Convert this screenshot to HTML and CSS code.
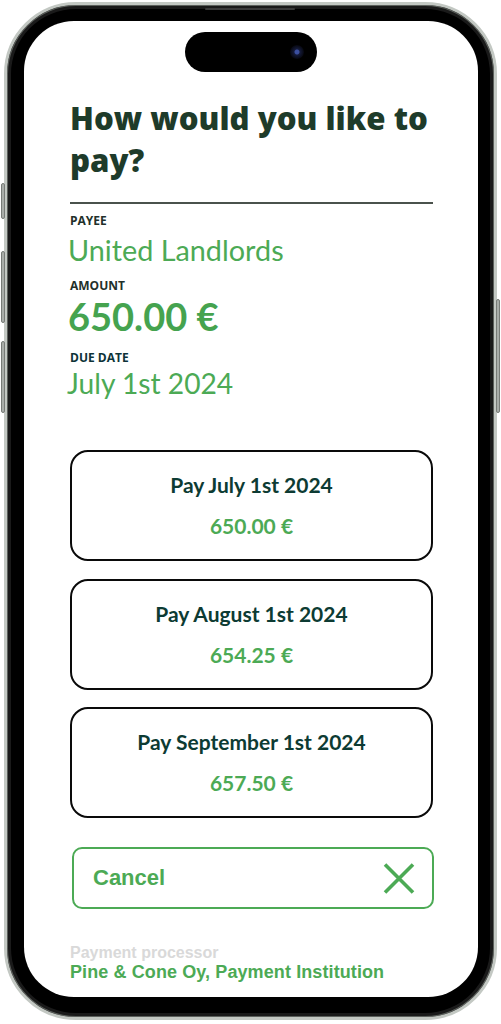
FILE: index.html
```html
<!DOCTYPE html>
<html lang="en">
<head>
<meta charset="utf-8">
<title>How would you like to pay?</title>
<link rel="stylesheet" href="styles.css">
</head>
<body>
<div class="phone">
  <span class="hw hw-silent"></span>
  <span class="hw hw-vol-up"></span>
  <span class="hw hw-vol-down"></span>
  <span class="hw hw-power"></span>
  <span class="speaker"></span>
  <div class="screen">
    <div class="island"><span class="cam"></span></div>
    <h1 class="title">How would you like to<br>pay?</h1>
    <div class="rule"></div>
    <div class="label label-payee">PAYEE</div>
    <div class="value">United Landlords</div>
    <div class="label label-amount">AMOUNT</div>
    <div class="value value-amount">650.00 €</div>
    <div class="label label-due">DUE DATE</div>
    <div class="value value-due">July 1st 2024</div>

    <div class="options">
      <div class="option">
        <div class="option-title">Pay July 1st 2024</div>
        <div class="option-amount">650.00 €</div>
      </div>
      <div class="option">
        <div class="option-title">Pay August 1st 2024</div>
        <div class="option-amount">654.25 €</div>
      </div>
      <div class="option">
        <div class="option-title">Pay September 1st 2024</div>
        <div class="option-amount">657.50 €</div>
      </div>
    </div>

    <div class="cancel">
      <span class="cancel-text">Cancel</span>
      <svg class="cancel-icon" width="32" height="31" viewBox="0 0 32 31" aria-hidden="true">
        <path d="M2 1.5 L30 29.5 M30 1.5 L2 29.5" stroke="#4caa55" stroke-width="3.6" fill="none"/>
      </svg>
    </div>

    <div class="proc-label">Payment processor</div>
    <div class="proc-name">Pine &amp; Cone Oy, Payment Institution</div>
  </div>
</div>
</body>
</html>
```

FILE: styles.css
```css
html, body {
  margin: 0;
  padding: 0;
  background: #ffffff;
}

body {
  width: 501px;
  height: 1024px;
  overflow: hidden;
}

.phone {
  position: relative;
  box-sizing: border-box;
  margin: 2px 0 0 4px;
  width: 493px;
  height: 1018px;
  border: 3px solid #c3c8c3;
  border-radius: 72px;
  background: #000;
  box-shadow: inset 0 0 0 1px #5c605c, inset 0 0 0 4px #1a1a1a;
  padding: 16px 16px 20px 17px;
}

.hw {
  position: absolute;
  width: 4px;
  background: #a9ada9;
  border: 1px solid #777b77;
  border-radius: 2px;
  box-sizing: border-box;
}
.hw-silent { left: -6px; top: 178px; height: 36px; }
.hw-vol-up { left: -6px; top: 246px; height: 72px; }
.hw-vol-down { left: -6px; top: 336px; height: 72px; }
.hw-power { right: -6px; top: 294px; height: 114px; }

.speaker {
  position: absolute;
  left: 198px;
  top: 3px;
  width: 90px;
  height: 2px;
  background: #3a3a3a;
  border-radius: 1px;
}

.screen {
  position: relative;
  box-sizing: border-box;
  width: 454px;
  height: 976px;
  background: #ffffff;
  border-radius: 50px;
  overflow: hidden;
  padding: 76px 45px 0 46px;
}

.island {
  position: absolute;
  left: 161px;
  top: 11px;
  width: 132px;
  height: 40px;
  background: #000;
  border-radius: 20px;
}
.cam {
  position: absolute;
  left: 105px;
  top: 13px;
  width: 14px;
  height: 14px;
  border-radius: 50%;
  background: radial-gradient(circle, #3b4fa0 0 2px, #141a3a 3px, #06070f 7px);
}

.title {
  margin: 0;
  font-family: "Open Sans", "DejaVu Sans", sans-serif;
  font-weight: 800;
  font-size: 31.2px;
  line-height: 42px;
  color: #1e3b2a;
  white-space: nowrap;
}

.rule {
  margin-top: 21px;
  height: 1.5px;
  background: #4a524c;
}

.label {
  font-family: "Open Sans", "DejaVu Sans", sans-serif;
  font-weight: 700;
  font-size: 12px;
  line-height: 14px;
  color: #22302a;
}
.label-payee { margin-top: 10px; }
.label-amount { margin-top: 13px; }
.label-due { margin-top: 13px; color: #0d3338; }

.value {
  margin-top: 6px;
  margin-left: -2px;
  font-family: Lato, "Open Sans", sans-serif;
  font-weight: 400;
  font-size: 28.8px;
  line-height: 32px;
  color: #4caa55;
}
.value-amount {
  margin-top: 1px;
  font-weight: 700;
  font-size: 38px;
  line-height: 44px;
  color: #45a34f;
}
.value-due {
  margin-top: 2px;
  margin-left: -3px;
  font-size: 28.2px;
}

.options {
  margin-top: 51.5px;
  display: flex;
  flex-direction: column;
  gap: 17.5px;
}

.option {
  box-sizing: border-box;
  height: 111px;
  border: 2px solid #0a0a0a;
  border-radius: 18px;
  display: flex;
  flex-direction: column;
  align-items: center;
  justify-content: center;
  gap: 13px;
  font-family: Lato, "Open Sans", sans-serif;
  font-weight: 700;
  font-size: 21px;
  line-height: 28px;
}
.option-title { color: #0d3b33; }
.option-amount { color: #4caa55; }

.cancel {
  box-sizing: border-box;
  margin-top: 29px;
  margin-left: 2px;
  width: 362px;
  height: 62px;
  border: 2px solid #4caa55;
  border-radius: 10px;
  display: flex;
  align-items: center;
  justify-content: space-between;
  padding: 0 17px 0 19px;
}
.cancel-text {
  font-family: "Liberation Sans", Arial, sans-serif;
  font-weight: 700;
  font-size: 22px;
  color: #4caa55;
}
.cancel-icon { display: block; }

.proc-label {
  margin-top: 35px;
  font-family: "Liberation Sans", Arial, sans-serif;
  font-weight: 700;
  font-size: 16px;
  line-height: 18px;
  color: #d9d9d9;
}
.proc-name {
  font-family: "Liberation Sans", Arial, sans-serif;
  font-weight: 700;
  font-size: 18px;
  line-height: 21px;
  color: #4caa55;
  letter-spacing: 0.1px;
}
```
